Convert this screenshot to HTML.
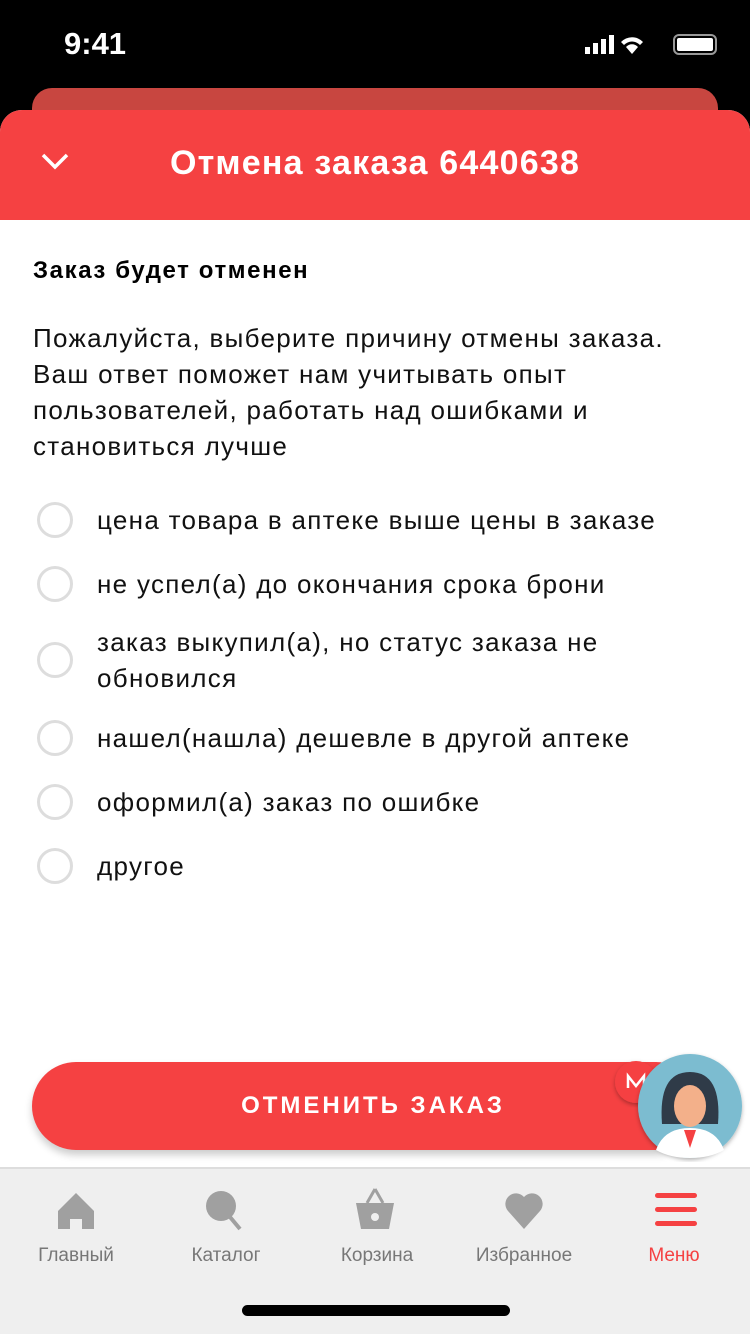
<!DOCTYPE html>
<html><head><meta charset="utf-8"><style>
*{margin:0;padding:0;box-sizing:border-box}
body{width:750px;height:1334px;background:#000;position:relative;overflow:hidden;font-family:"Liberation Sans","DejaVu Sans",sans-serif}
.time{position:absolute;left:64px;top:26px;color:#fff;font-size:31px;font-weight:600}
.back{position:absolute;left:32px;top:88px;width:686px;height:60px;background:#c84640;border-radius:20px}
.sheet{position:absolute;left:0;top:110px;width:750px;height:1224px;background:#fff;border-radius:22px 22px 0 0;overflow:hidden}
.hdr{height:110px;background:#f54142;color:#fff;font-size:34px;font-weight:bold;text-align:center;line-height:106px;letter-spacing:1.2px}
.chev{position:absolute;left:40px;top:42px}
h2{position:absolute;left:33px;top:147px;font-size:24px;font-weight:bold;color:#000;letter-spacing:1.6px}
.p{position:absolute;left:33px;top:210px;width:700px;font-size:26px;line-height:36px;color:#111;letter-spacing:1.3px;white-space:nowrap}
.opt{position:absolute;left:37px;font-size:26px;color:#111;line-height:36px;letter-spacing:1.3px}
.opt i{position:absolute;left:0;width:36px;height:36px;border:3px solid #ddd;border-radius:50%}
.opt span{position:absolute;left:60px;white-space:nowrap}
.btn{position:absolute;left:32px;top:952px;width:668px;height:88px;background:#f54142;border-radius:44px;color:#fff;font-weight:bold;font-size:24px;letter-spacing:3px;text-align:center;line-height:88px;box-shadow:0 5px 8px rgba(0,0,0,.2);padding-left:14px}
.tab{position:absolute;left:0;top:1167px;width:750px;height:167px;background:#efefef;border-top:2px solid #ddd}
.ti{position:absolute;top:76px;font-size:19px;color:#777;width:150px;text-align:center}
.home{position:absolute;left:242px;top:1305px;width:268px;height:11px;background:#000;border-radius:6px}
</style></head><body>
<div class="time">9:41</div>
<svg style="position:absolute;left:585px;top:33px" width="140" height="24"><rect x="0" y="14" width="5" height="7" fill="#fff"/><rect x="8" y="10" width="5" height="11" fill="#fff"/><rect x="16" y="6" width="5" height="15" fill="#fff"/><rect x="24" y="2" width="5" height="19" fill="#fff"/><path d="M36 9a15 15 0 0 1 22 0l-3 3a11 11 0 0 0-16 0zM41 14a8 8 0 0 1 12 0l-6 7z" fill="#fff"/><rect x="89" y="2" width="42" height="19" rx="5" fill="none" stroke="#999" stroke-width="2"/><rect x="92" y="5" width="36" height="13" rx="2" fill="#fff"/></svg>
<div class="back"></div>
<div class="sheet">
<div class="hdr">Отмена заказа 6440638</div>
<svg class="chev" width="30" height="20"><path d="M3 3l12 12 12-12" stroke="#fff" stroke-width="3.5" fill="none"/></svg>
<h2>Заказ будет отменен</h2>
<div class="p">Пожалуйста, выберите причину отмены заказа.<br>Ваш ответ поможет нам учитывать опыт<br>пользователей, работать над ошибками и<br>становиться лучше</div>
<div class="opt" style="top:392px"><i></i><span>цена товара в аптеке выше цены в заказе</span></div>
<div class="opt" style="top:456px"><i></i><span>не успел(а) до окончания срока брони</span></div>
<div class="opt" style="top:532px"><i></i><span style="top:-18px">заказ выкупил(а), но статус заказа не<br>обновился</span></div>
<div class="opt" style="top:610px"><i></i><span>нашел(нашла) дешевле в другой аптеке</span></div>
<div class="opt" style="top:674px"><i></i><span>оформил(а) заказ по ошибке</span></div>
<div class="opt" style="top:738px"><i></i><span>другое</span></div>
<div class="btn">ОТМЕНИТЬ ЗАКАЗ</div>
</div>
<svg style="position:absolute;left:608px;top:1052px" width="140" height="110">
<defs><filter id="s"><feDropShadow dx="0" dy="2" stdDeviation="2" flood-opacity=".3"/></filter></defs>
<circle cx="28" cy="30" r="21" fill="#f54142" filter="url(#s)"/><path d="M20 36v-12l8 10 8-10v12" stroke="#fff" stroke-width="2.5" fill="none"/>
<circle cx="82" cy="54" r="52" fill="#7bbcd0" filter="url(#s)"/>
<path d="M54 72q-4-52 28-52t28 52z" fill="#2f3b48"/>
<ellipse cx="82" cy="54" rx="16" ry="21" fill="#f3b08a"/>
<path d="M48 98q8-22 34-22t34 22q-14 8-34 8t-34-8z" fill="#fff"/><path d="M76 78l6 18 6-18z" fill="#f54142"/>
</svg>
<div class="tab">
<svg style="position:absolute;left:56px;top:22px" width="40" height="40"><path d="M20 2l18 18v18H26V28h-12v10H2V20z" fill="#a0a0a0"/></svg>
<svg style="position:absolute;left:204px;top:20px" width="40" height="44"><circle cx="17" cy="17" r="15" fill="#a0a0a0"/><path d="M26 28l10 12" stroke="#a0a0a0" stroke-width="4"/></svg>
<svg style="position:absolute;left:354px;top:18px" width="42" height="46"><path d="M21 2l-8 14M21 2l8 14" stroke="#a0a0a0" stroke-width="3" fill="none"/><path d="M2 16h38l-5 26H7z" fill="#a0a0a0"/><circle cx="21" cy="30" r="4" fill="#efefef"/></svg>
<svg style="position:absolute;left:504px;top:22px" width="40" height="40"><path d="M20 38L4 20a10 10 0 0 1 16-14 10 10 0 0 1 16 14z" fill="#a0a0a0"/></svg>
<svg style="position:absolute;left:655px;top:24px" width="42" height="36"><rect x="0" y="0" width="42" height="5" rx="2.5" fill="#f54142"/><rect x="0" y="14" width="42" height="5" rx="2.5" fill="#f54142"/><rect x="0" y="28" width="42" height="5" rx="2.5" fill="#f54142"/></svg>
<div class="ti" style="left:1px">Главный</div>
<div class="ti" style="left:151px">Каталог</div>
<div class="ti" style="left:302px">Корзина</div>
<div class="ti" style="left:449px">Избранное</div>
<div class="ti" style="left:599px;color:#f54142">Меню</div>
</div>
<div class="home"></div>
</body></html>
